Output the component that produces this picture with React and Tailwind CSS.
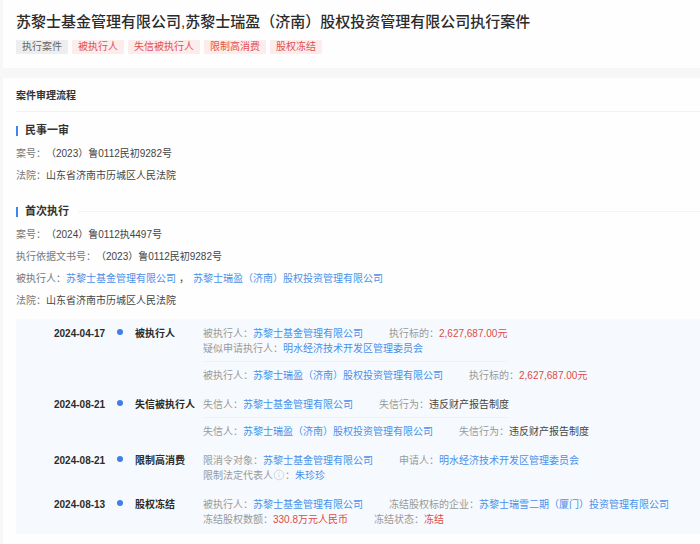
const flow = [
  {
    date: "2024-04-17",
    type: "被执行人",
    records: [
      [
        [
          { label: "被执行人：", link: "苏黎士基金管理有限公司" },
          { label: "执行标的：", amount: "2,627,687.00元" },
        ],
        [{ label: "疑似申请执行人：", link: "明水经济技术开发区管理委员会" }],
      ],
      [
        [
          { label: "被执行人：", link: "苏黎士瑞盈（济南）股权投资管理有限公司" },
          { label: "执行标的：", amount: "2,627,687.00元" },
        ],
      ],
    ],
  },
  {
    date: "2024-08-21",
    type: "失信被执行人",
    records: [
      [
        [
          { label: "失信人：", link: "苏黎士基金管理有限公司" },
          { label: "失信行为：", text: "违反财产报告制度" },
        ],
      ],
      [
        [
          { label: "失信人：", link: "苏黎士瑞盈（济南）股权投资管理有限公司" },
          { label: "失信行为：", text: "违反财产报告制度" },
        ],
      ],
    ],
  },
  {
    date: "2024-08-21",
    type: "限制高消费",
    records: [
      [
        [
          { label: "限消令对象：", link: "苏黎士基金管理有限公司" },
          { label: "申请人：", link: "明水经济技术开发区管理委员会" },
        ],
        [{ label: "限制法定代表人", info: true, link: "朱珍珍" }],
      ],
    ],
  },
  {
    date: "2024-08-13",
    type: "股权冻结",
    records: [
      [
        [
          { label: "被执行人：", link: "苏黎士基金管理有限公司" },
          { label: "冻结股权标的企业：", link: "苏黎士瑞雪二期（厦门）投资管理有限公司" },
        ],
        [
          { label: "冻结股权数额：", amount: "330.8万元人民币" },
          { label: "冻结状态：", amount: "冻结" },
        ],
      ],
    ],
  },
];

export default function App() {
  return (
    <div className="min-h-screen bg-[#f7f7f7] pl-[3px] font-['Liberation_Sans','Noto_Sans_CJK_SC',sans-serif] text-[10px] leading-[15px] text-[#444]">
      <header className="bg-[#fefefe] px-[13px] pt-3 pb-[14px]">
        <h1 className="text-[15px] leading-5 font-medium text-[#2b2b2b]">
          苏黎士基金管理有限公司,苏黎士瑞盈（济南）股权投资管理有限公司执行案件
        </h1>
        <div className="mt-2 flex flex-wrap gap-1">
          <Tag gray>执行案件</Tag>
          <Tag>被执行人</Tag>
          <Tag>失信被执行人</Tag>
          <Tag>限制高消费</Tag>
          <Tag>股权冻结</Tag>
        </div>
      </header>

      <main className="mt-[10px] min-h-[calc(100vh-78px)] bg-[#fefefe] pb-[10px]">
        <h2 className="ml-[13px] border-b border-[#f2f2f2] pt-[10px] pb-2 font-bold text-[#333]">
          案件审理流程
        </h2>

        <section className="pt-[11px] pl-[13px]">
          <StageTitle>民事一审</StageTitle>
          <dl className="mt-2 space-y-[7px]">
            <Field label="案号：">（2023）鲁0112民初9282号</Field>
            <Field label="法院：">山东省济南市历城区人民法院</Field>
          </dl>
        </section>

        <section className="pt-[21px] pl-[13px]">
          <StageTitle line>首次执行</StageTitle>
          <dl className="mt-2 space-y-[7px]">
            <Field label="案号：">（2024）鲁0112执4497号</Field>
            <Field label="执行依据文书号：">（2023）鲁0112民初9282号</Field>
            <Field label="被执行人：">
              <Company>苏黎士基金管理有限公司</Company>
              <span className="mr-1 ml-[3px]">，</span>
              <Company>苏黎士瑞盈（济南）股权投资管理有限公司</Company>
            </Field>
            <Field label="法院：">山东省济南市历城区人民法院</Field>
          </dl>

          <ol className="mt-[11px] space-y-[14px] bg-[#f6fafe] py-[7px] pl-[38px]">
            {flow.map((entry) => (
              <Entry key={entry.date + entry.type} entry={entry} />
            ))}
          </ol>
        </section>
      </main>
    </div>
  );
}

/* ---------- UI Helpers ---------- */

function Tag({ gray, children }) {
  return (
    <span
      className={
        "rounded-[1px] px-[6px] leading-[14px] " +
        (gray ? "bg-[#eeeeee] text-[#666]" : "bg-[#fdecec] text-[#e0504e]")
      }
    >
      {children}
    </span>
  );
}

function StageTitle({ line, children }) {
  return (
    <div className="flex items-center">
      <span className="h-[10px] w-[2px] bg-[#3f85ee]" />
      <h3 className="ml-[7px] text-[11px] leading-[15px] font-bold text-[#333]">{children}</h3>
      {line && <span className="ml-[9px] h-px flex-1 bg-[#f3f3f3]" />}
    </div>
  );
}

function Field({ label, children }) {
  return (
    <div className="flex">
      <dt className="shrink-0 text-[#777]">{label}</dt>
      <dd>{children}</dd>
    </div>
  );
}

function Company({ children }) {
  return (
    <a href="#" className="text-[#4a90ea] hover:underline">
      {children}
    </a>
  );
}

function InfoIcon() {
  return (
    <svg viewBox="0 0 12 12" className="inline-block size-3 align-[-2px]" fill="none" stroke="#d3d6da">
      <circle cx="6" cy="6" r="4.8" />
      <path d="M6 5.4v3M6 3.4v1" />
    </svg>
  );
}

function Item({ item }) {
  return (
    <span>
      <span className="text-[#999]">
        {item.label}
        {item.info && (
          <>
            <InfoIcon />：
          </>
        )}
      </span>
      {item.link && <Company>{item.link}</Company>}
      {item.amount && <span className="text-[#dd4a48]">{item.amount}</span>}
      {item.text}
    </span>
  );
}

function Entry({ entry }) {
  return (
    <li className="flex">
      <time className="w-[63px] shrink-0 font-bold text-[#2b2b2b]">{entry.date}</time>
      <span className="mt-[3px] size-[6px] shrink-0 rounded-full bg-[#3f7fe8]" />
      <h4 className="ml-3 w-[68px] shrink-0 font-bold text-[#2b2b2b]">{entry.type}</h4>
      <div className="min-w-0">
        {entry.records.map((lines, i) => (
          <div
            key={i}
            className={
              i < entry.records.length - 1
                ? "mb-[6px] w-fit border-b border-[#eef2f6] pb-[5px]"
                : "w-fit"
            }
          >
            {lines.map((items, j) => (
              <div key={j} className="flex flex-wrap gap-x-[26px]">
                {items.map((item) => (
                  <Item key={item.label} item={item} />
                ))}
              </div>
            ))}
          </div>
        ))}
      </div>
    </li>
  );
}
